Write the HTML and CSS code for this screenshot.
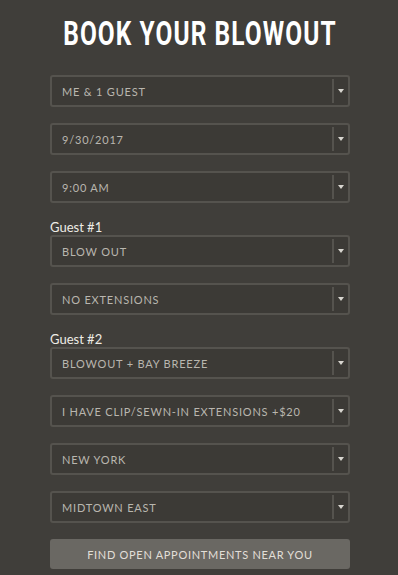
FILE: index.html
```html
<!DOCTYPE html>
<html>
<head>
<meta charset="utf-8">
<link rel="stylesheet" href="styles.css">
</head>
<body>
<div class="page">
  <h1 class="title"><span class="title-text">BOOK YOUR BLOWOUT</span></h1>
  <div class="form">
    <div class="select"><span class="value">ME &amp; 1 GUEST</span><span class="arrow-box"><span class="arrow"></span></span></div>
    <div class="select"><span class="value">9/30/2017</span><span class="arrow-box"><span class="arrow"></span></span></div>
    <div class="select"><span class="value">9:00 AM</span><span class="arrow-box"><span class="arrow"></span></span></div>
    <div class="label">Guest #1</div>
    <div class="select"><span class="value">BLOW OUT</span><span class="arrow-box"><span class="arrow"></span></span></div>
    <div class="select"><span class="value">NO EXTENSIONS</span><span class="arrow-box"><span class="arrow"></span></span></div>
    <div class="label">Guest #2</div>
    <div class="select"><span class="value">BLOWOUT + BAY BREEZE</span><span class="arrow-box"><span class="arrow"></span></span></div>
    <div class="select"><span class="value">I HAVE CLIP/SEWN-IN EXTENSIONS +$20</span><span class="arrow-box"><span class="arrow"></span></span></div>
    <div class="select"><span class="value">NEW YORK</span><span class="arrow-box"><span class="arrow"></span></span></div>
    <div class="select"><span class="value">MIDTOWN EAST</span><span class="arrow-box"><span class="arrow"></span></span></div>
    <button class="submit">FIND OPEN APPOINTMENTS NEAR YOU</button>
  </div>
</div>
</body>
</html>
```
FILE: styles.css
```css
html, body {
  margin: 0;
  padding: 0;
  background: #403e3a;
}
body {
  font-family: Lato, "Open Sans", sans-serif;
  height: 575px;
  overflow: hidden;
}
.page {
  width: 300px;
  margin-left: 50px;
  padding-top: 13px;
}
.title {
  margin: 0;
  height: 62px;
  line-height: 40px;
  display: flex;
  justify-content: center;
  white-space: nowrap;
  font-family: Roboto, "Liberation Sans", sans-serif;
  font-weight: bold;
  font-size: 34px;
  color: #ffffff;
}
.title-text {
  display: inline-block;
  flex: none;
  transform: scaleX(0.72);
  transform-origin: center;
  letter-spacing: 1.5px;
}
.form {
  display: flex;
  flex-direction: column;
}
.select {
  box-sizing: border-box;
  height: 32px;
  border: 2px solid #55534e;
  border-radius: 3px;
  background: #3c3a36;
  display: flex;
  align-items: center;
  margin-bottom: 16px;
}
.value {
  flex: 1;
  padding-left: 10px;
  font-size: 11px;
  letter-spacing: 0.8px;
  color: #b9b6af;
  white-space: nowrap;
}
.arrow-box {
  width: 14px;
  height: 24px;
  border-left: 2px solid #55534e;
  display: flex;
  align-items: center;
  justify-content: center;
}
.arrow {
  width: 0;
  height: 0;
  border-left: 3px solid transparent;
  border-right: 3px solid transparent;
  border-top: 4px solid #d8d6d0;
}
.label {
  height: 16px;
  line-height: 16px;
  font-size: 13px;
  color: #eeece6;
}
.submit {
  box-sizing: border-box;
  height: 30px;
  border: none;
  border-radius: 3px;
  background: #6a6863;
  color: #e2dfd8;
  font-family: Lato, "Open Sans", sans-serif;
  font-size: 11px;
  letter-spacing: 0.7px;
  padding: 0;
  width: 300px;
}
```
